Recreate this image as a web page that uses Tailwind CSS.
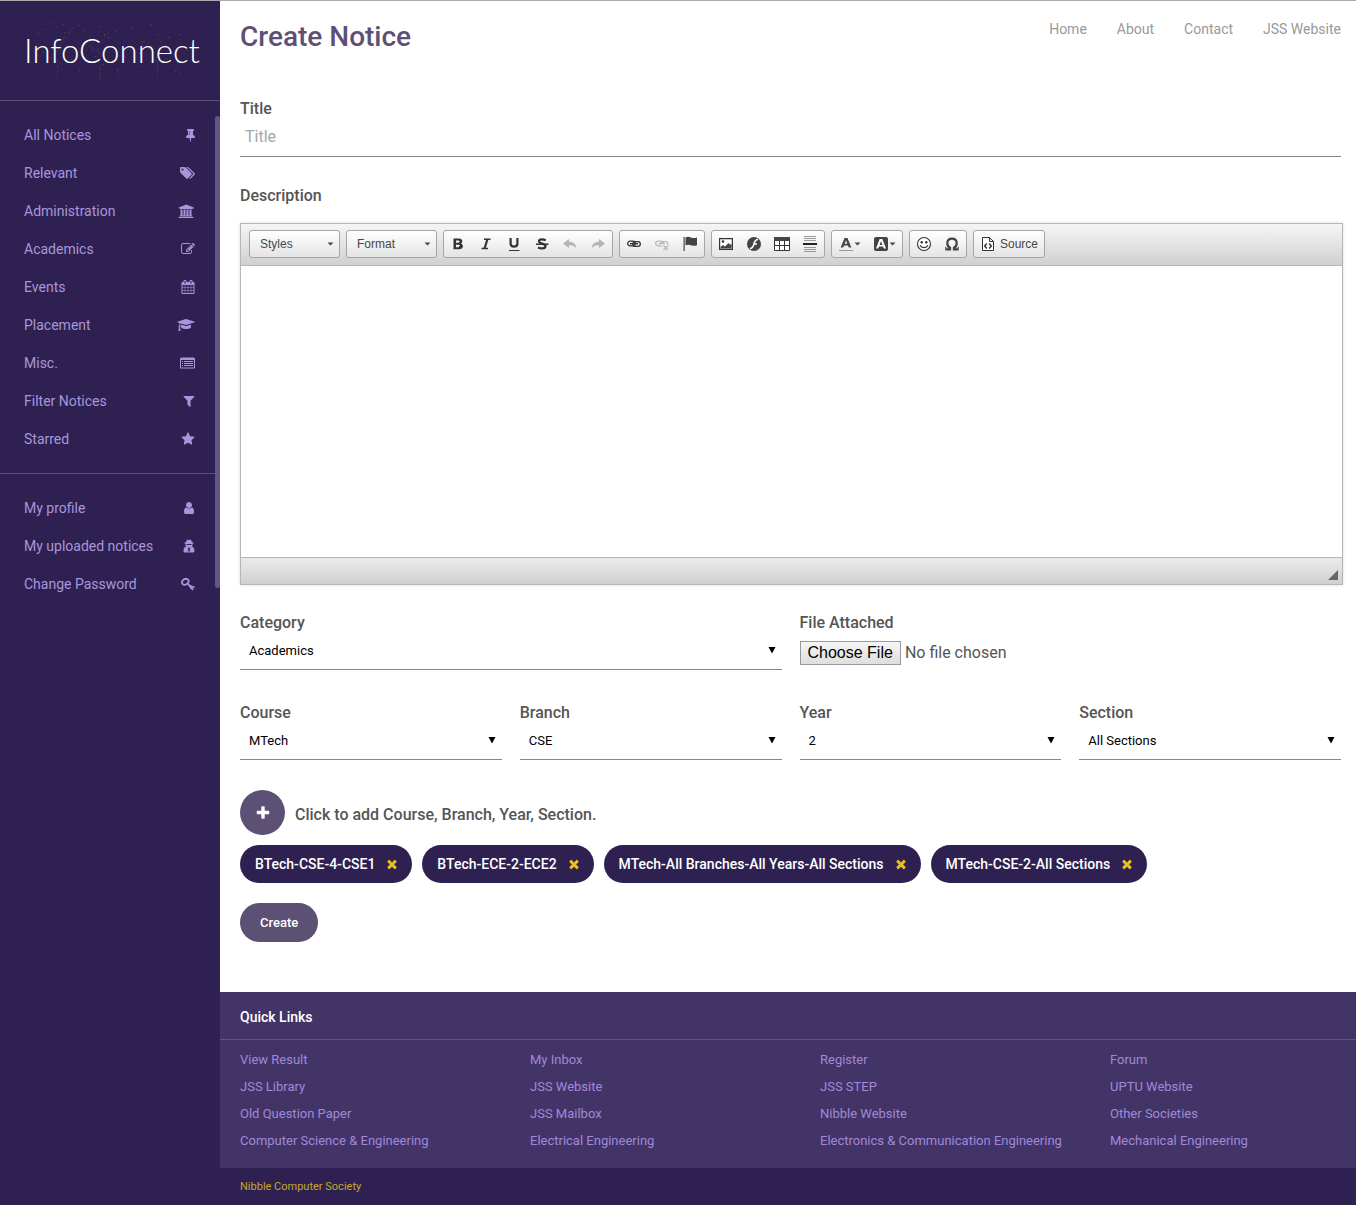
<!DOCTYPE html>
<html lang="en">
<head>
<meta charset="utf-8">
<title>InfoConnect - Create Notice</title>
<script src="https://cdn.jsdelivr.net/npm/@tailwindcss/browser@4"></script>
</head>
<body class="bg-white font-['Roboto',sans-serif] text-[#555]">
<svg class="hidden">
  <symbol id="caret" viewBox="0 0 8 8"><path d="M.5 1h7L4 7.500z"/></symbol>
  <symbol id="times" viewBox="0 0 1792 1792"><path d="M1490 1322q0 40-28 68l-136 136q-28 28-68 28t-68-28l-294-294-294 294q-28 28-68 28t-68-28l-136-136q-28-28-28-68t28-68l294-294-294-294q-28-28-28-68t28-68l136-136q28-28 68-28t68 28l294 294 294-294q28-28 68-28t68 28l136 136q28 28 28 68t-28 68l-294 294 294 294q28 28 28 68z"/></symbol>
</svg>
<div class="flex min-h-screen border-t border-[#aaa]">

  <!-- Sidebar -->
  <aside class="flex w-[220px] shrink-0 flex-col bg-[#2e2151]">
    <div class="relative flex h-[100px] items-center justify-center border-b border-[#5c4f78] pl-1">
      <svg class="absolute inset-0 h-full w-full" viewBox="0 0 220 100" fill="none" stroke="#a8764f" stroke-opacity=".55" aria-hidden="true">
        <path d="M37 33h1M44 29h1M52 23h1M55 27h1M62 24h1M64 32h1M68 33h1M78 25h1M83 30h1M99 26h1M104 34h1M108 37h1M116 31h1M131 28h1M142 41h1M151 24h1M158 34h1M161 41h1M169 37h1M180 34h1M36 47h1M42 52h1M50 57h1M71 59h1M80 52h1M92 49h1M95 56h1M103 64h1M112 60h1M124 57h1M139 53h1M149 48h1M156 60h1M166 58h1M178 62h1M187 50h1M47 66h1M61 69h1M79 70h1M117 69h1M141 66h1M176 71h1"/>
        <path stroke-opacity=".2" stroke-dasharray="2 1" d="M57 58v20M61 62l-3 6M100 60v20M97 47l8 14M89 44l10 9M108 31l-8 13M64 36l-9 18M73 26l-5 7M158 61v16M164 46l-8 12M178 66l4 12M118 68v8M146 38l-5 10"/>
      </svg>
      <a href="#" class="relative font-['Lato',sans-serif] text-[33px] leading-none font-light text-white">InfoConnect</a>
    </div>
    <div class="relative">
      <nav class="py-[15px]">
        <ul class="text-sm text-[#a995dc]">
          <li><a href="#" class="flex h-[38px] items-center justify-between pr-[25px] pl-6">All Notices<svg class="h-3.5 w-[9px] fill-current" viewBox="320 0 1152 1792"><path d="M800 864v-448q0-14-9-23t-23-9-23 9-9 23v448q0 14 9 23t23 9 23-9 9-23zm672 352q0 26-19 45t-45 19h-429l-51 483q-2 12-10.500 20.500t-20.500 8.500h-1q-27 0-32-27l-76-485h-404q-26 0-45-19t-19-45q0-123 78.500-221.500t177.500-98.500v-512q-52 0-90-38t-38-90 38-90 90-38h640q52 0 90 38t38 90-38 90-90 38v512q99 0 177.500 98.500t78.500 221.500z"/></svg></a></li>
          <li><a href="#" class="flex h-[38px] items-center justify-between pr-[25px] pl-6">Relevant<svg class="h-3.5 w-4 fill-current" viewBox="0 0 2048 1792"><path d="M576 448q0-53-37.500-90.500t-90.500-37.500-90.500 37.500-37.500 90.500 37.500 90.500 90.500 37.500 90.500-37.500 37.500-90.500zm1067 576q0 53-37 90l-491 492q-39 37-91 37-53 0-90-37l-715-716q-38-37-64.500-101t-26.500-117v-416q0-52 38-90t90-38h416q53 0 117 26.500t102 64.500l715 714q37 39 37 91zm384 0q0 53-37 90l-491 492q-39 37-91 37-36 0-59-14t-53-45l470-470q37-37 37-90 0-52-37-91l-715-714q-38-38-102-64.500t-117-26.500h224q53 0 117 26.500t102 64.500l715 714q37 39 37 91z"/></svg></a></li>
          <li><a href="#" class="flex h-[38px] items-center justify-between pr-[25px] pl-6">Administration<svg class="h-3.5 w-[17px] fill-current" viewBox="0 0 2048 1792"><path d="M992 64l960 384v128h-128q0 26-20.500 45t-48.500 19h-1526q-28 0-48.500-19t-20.500-45h-128v-128zm-736 640h256v768h128v-768h256v768h128v-768h256v768h128v-768h256v768h59q28 0 48.500 19t20.500 45v64h-1664v-64q0-26 20.500-45t48.500-19h59v-768zm1595 960q28 0 48.500 19t20.500 45v128h-1920v-128q0-26 20.500-45t48.500-19h1782z"/></svg></a></li>
          <li><a href="#" class="flex h-[38px] items-center justify-between pr-[25px] pl-6">Academics<svg class="h-3.5 w-3.5 fill-current" viewBox="0 0 1792 1792"><path d="M888 1184l116-116-152-152-116 116v56h96v96h56zm440-720q-16-16-33 1l-350 350q-17 17-1 33t33-1l350-350q17-17 1-33zm80 594v190q0 119-84.500 203.500t-203.500 84.500h-832q-119 0-203.500-84.500t-84.500-203.500v-832q0-119 84.500-203.500t203.500-84.500h832q63 0 117 25 15 7 18 23 3 17-9 29l-49 49q-14 14-32 8-23-6-45-6h-832q-66 0-113 47t-47 113v832q0 66 47 113t113 47h832q66 0 113-47t47-113v-126q0-13 9-22l64-64q15-15 35-7t20 29zm-96-738l288 288-672 672h-288v-288zm444 132l-92 92-288-288 92-92q28-28 68-28t68 28l152 152q28 28 28 68t-28 68z"/></svg></a></li>
          <li><a href="#" class="flex h-[38px] items-center justify-between pr-[25px] pl-6">Events<svg class="h-3.5 w-3.5 fill-current" viewBox="0 0 1792 1792"><path d="M192 1664h288v-288h-288v288zm352 0h320v-288h-320v288zm-352-352h288v-320h-288v320zm352 0h320v-320h-320v320zm-352-384h288v-288h-288v288zm736 736h320v-288h-320v288zm-384-736h320v-288h-320v288zm768 736h288v-288h-288v288zm-384-352h320v-320h-320v320zm-352-864v-288q0-13-9.500-22.500t-22.500-9.500h-64q-13 0-22.500 9.500t-9.500 22.500v288q0 13 9.500 22.500t22.500 9.500h64q13 0 22.500-9.500t9.500-22.500zm736 864h288v-320h-288v320zm-384-384h320v-288h-320v288zm384 0h288v-288h-288v288zm32-480v-288q0-13-9.500-22.500t-22.500-9.500h-64q-13 0-22.500 9.500t-9.500 22.500v288q0 13 9.500 22.500t22.500 9.500h64q13 0 22.500-9.500t9.500-22.500zm384-64v1280q0 52-38 90t-90 38h-1408q-52 0-90-38t-38-90v-1280q0-52 38-90t90-38h128v-96q0-66 47-113t113-47h64q66 0 113 47t47 113v96h384v-96q0-66 47-113t113-47h64q66 0 113 47t47 113v96h128q52 0 90 38t38 90z"/></svg></a></li>
          <li><a href="#" class="flex h-[38px] items-center justify-between pr-[25px] pl-6">Placement<svg class="h-3.5 w-[18px] fill-current" viewBox="0 0 2304 1792"><path d="M1774 836l18 316q4 69-82 128t-235 93.500-323 34.500-323-34.500-235-93.500-82-128l18-316 574 181q22 7 48 7t48-7zm530-324q0 23-22 31l-1120 352q-4 1-10 1t-10-1l-652-206q-43 34-71 111.500t-34 178.500q63 36 63 109 0 69-58 107l58 433q2 14-8 25-9 11-24 11h-192q-15 0-24-11-10-11-8-25l58-433q-58-38-58-107 0-73 65-111 11-207 98-330l-333-104q-22-8-22-31t22-31l1120-352q4-1 10-1t10 1l1120 352q22 8 22 31z"/></svg></a></li>
          <li><a href="#" class="flex h-[38px] items-center justify-between pr-[25px] pl-6">Misc.<svg class="h-3.5 w-[15px] fill-current" viewBox="0 0 15 14"><path fill-rule="evenodd" d="M1.500 1.500h12A1.500 1.500 0 0 1 15 3v8.500a1 1 0 0 1-1 1H1a1 1 0 0 1-1-1V3a1.500 1.500 0 0 1 1.500-1.500zM1 4v7.500h13V4zM2 5h1v1H2zM4 5h9v1H4zM2 7h1v1H2zM4 7h9v1H4zM2 9h1v1H2zM4 9h9v1H4z"/></svg></a></li>
          <li><a href="#" class="flex h-[38px] items-center justify-between pr-[25px] pl-6">Filter Notices<svg class="h-3.5 w-3 fill-current" viewBox="180 0 1432 1792"><path d="M1595 295q17 41-14 70l-493 493v742q0 42-39 59-13 5-25 5-27 0-45-19l-256-256q-19-19-19-45v-486l-493-493q-31-29-14-70 17-39 59-39h1280q42 0 59 39z"/></svg></a></li>
          <li><a href="#" class="flex h-[38px] items-center justify-between pr-[25px] pl-6">Starred<svg class="h-3.5 w-3.5 fill-current" viewBox="0 0 1792 1792"><path d="M1728 647q0 22-26 48l-363 354 86 500q1 7 1 20 0 21-10.500 35.500t-30.500 14.500q-19 0-40-12l-449-236-449 236q-22 12-40 12-21 0-31.500-14.500t-10.500-35.500q0-6 2-20l86-500-364-354q-25-27-25-48 0-37 56-46l502-73 225-455q19-41 49-41t49 41l225 455 502 73q56 9 56 46z"/></svg></a></li>
        </ul>
      </nav>
      <nav class="border-t border-[#5c4f78] py-[15px]">
        <ul class="text-sm text-[#a995dc]">
          <li><a href="#" class="flex h-[38px] items-center justify-between pr-[25px] pl-6">My profile<svg class="h-3.5 w-3 fill-current" viewBox="196 0 1400 1792"><path d="M1536 1399q0 109-62.500 187t-150.500 78h-854q-88 0-150.500-78t-62.500-187q0-85 8.500-160.500t31.500-152 58.500-131 94-89 134.500-34.500q131 128 313 128t313-128q76 0 134.500 34.500t94 89 58.500 131 31.500 152 8.500 160.500zm-256-887q0 159-112.500 271.500t-271.500 112.500-271.500-112.500-112.500-271.500 112.500-271.500 271.500-112.500 271.500 112.500 112.500 271.500z"/></svg></a></li>
          <li><a href="#" class="flex h-[38px] items-center justify-between pr-[25px] pl-6">My uploaded notices<svg class="h-3.5 w-3 fill-current" viewBox="0 0 12 14"><path fill-rule="evenodd" d="M4.300.5 6 1l1.700-.5L9 3l2 .9-1.500.9v1.600L9 7.500c1.800.8 2.500 2.300 2.500 4.200 0 1.100-.7 1.800-1.700 1.800H2.200c-1 0-1.700-.7-1.700-1.800 0-1.900.7-3.400 2.500-4.200l-.5-1.100V4.800L1 3.900 3 3zM3.500 5.100v.9h2l.5-.5.5.5h2v-.9zM4.200 8.800l1 .8-.5 2.900h.9L6 9.800l.4 2.700h.9l-.5-2.900 1-.8z"/></svg></a></li>
          <li><a href="#" class="flex h-[38px] items-center justify-between pr-[25px] pl-6">Change Password<svg class="h-3.5 w-3.5" viewBox="0 0 14 14" fill="none" stroke="currentColor" stroke-width="1.800"><ellipse cx="4.300" cy="4.800" rx="3.500" ry="2.700" transform="rotate(-35 4.300 4.800)"/><path d="M6.800 6.600 12 12.800M8.500 8.500 13.500 10.500M11 9.500l-1.700 2"/></svg></a></li>
        </ul>
      </nav>
      <div class="absolute top-[15px] right-0 bottom-[30px] w-[5px] rounded-full bg-[#655585]"></div>
    </div>
  </aside>

  <div class="flex min-w-0 flex-1 flex-col">
    <main class="flex-1 pr-[15px] pb-[50px] pl-5">
      <header class="flex h-[95px] items-start justify-between">
        <h1 class="pt-4 text-[28px] leading-10 font-medium text-[#5c5074]">Create Notice</h1>
        <nav class="flex gap-[30px] pt-[18px] text-sm text-[#999]">
          <a href="#">Home</a><a href="#">About</a><a href="#">Contact</a><a href="#">JSS Website</a>
        </nav>
      </header>

      <form>
        <label for="title" class="block pt-0.5 leading-[22px] font-medium">Title</label>
        <input id="title" type="text" placeholder="Title" class="block h-[37px] w-full border-b border-[#888] px-[5px] pb-1 text-base placeholder:text-[#a5a5a5] focus:outline-none">

        <label for="description" class="mt-[26px] mb-4 block pt-0.5 leading-[22px] font-medium">Description</label>
        <div class="box-content w-full border border-[#b6b6b6] shadow-[0_0_3px_rgba(0,0,0,0.15)]">
          <div class="flex h-[42px] items-center gap-1.5 border-b border-[#b6b6b6] bg-linear-to-b from-[#f5f5f5] to-[#cfd1cf] px-2 pb-px font-['Liberation_Sans',sans-serif] text-xs text-[#474747]">
            <div class="relative">
              <select aria-label="Styles" class="block h-7 w-[91px] appearance-none rounded-[3px] border border-[#a6a6a6] bg-linear-to-b from-white to-[#e4e4e4] pl-2.5"><option>Styles</option></select>
              <svg class="pointer-events-none absolute top-3 right-1.5 h-1 w-[7px] fill-[#474747]" viewBox="0 0 7 4"><path d="M.5.5h6l-3 3z"/></svg>
            </div>
            <div class="relative">
              <select aria-label="Format" class="block h-7 w-[91px] appearance-none rounded-[3px] border border-[#a6a6a6] bg-linear-to-b from-white to-[#e4e4e4] pl-2.5"><option>Format</option></select>
              <svg class="pointer-events-none absolute top-3 right-1.5 h-1 w-[7px] fill-[#474747]" viewBox="0 0 7 4"><path d="M.5.5h6l-3 3z"/></svg>
            </div>
            <div class="flex h-7 items-center rounded-[3px] border border-[#a6a6a6] bg-linear-to-b from-white to-[#e4e4e4]">
              <button type="button" aria-label="Bold" class="px-1.5"><svg class="size-4" viewBox="0 0 16 16"><path fill="#333" fill-rule="evenodd" d="M3.500 2.500h5.200c2.300 0 3.600 1 3.600 2.800 0 1.200-.6 2-1.600 2.300 1.400.3 2.200 1.200 2.200 2.600 0 2-1.400 3-3.700 3H3.500zM6 4.500v2.300h2c1 0 1.500-.4 1.500-1.200S9 4.500 8 4.500zm0 4.200v2.500h2.300c1.100 0 1.600-.4 1.600-1.200s-.5-1.300-1.600-1.300z"/></svg></button>
              <button type="button" aria-label="Italic" class="px-1.5"><svg class="size-4" viewBox="0 0 16 16" fill="none" stroke="#333"><path stroke-width="1.500" d="M6 3.200h6.500M3.500 12.500H10"/><path stroke-width="2.200" d="M9.500 3l-3 9.500"/></svg></button>
              <button type="button" aria-label="Underline" class="px-1.5"><svg class="size-4" viewBox="0 0 16 16" fill="none" stroke="#333"><path stroke-width="2.200" d="M4.600 2v5.500c0 2.200 1.100 3.200 3.400 3.200s3.400-1 3.400-3.200V2"/><path d="M3 14.500h10.500"/></svg></button>
              <button type="button" aria-label="Strikethrough" class="px-1.5"><svg class="size-4" viewBox="0 0 16 16" fill="none" stroke="#333"><path stroke-width="2.200" d="M11.800 4.200C10.500 3.700 9.500 3.400 8 3.400c-2 0-3 .6-3 1.800 0 3 6.500 1.800 6.500 4.800 0 1.700-1.300 2.400-3.300 2.400-1.500 0-3-.4-4.200-1"/><path stroke-width="1.500" d="M2 8.200h12.500"/></svg></button>
              <button type="button" aria-label="Undo" class="px-1.5"><svg class="size-4" viewBox="0 0 16 16"><path fill="#b4b4b4" d="M1 7.500 7 3v2.700c4 0 7 2 7.500 7-1.700-2.500-4-3.400-7.500-3.400V12z"/></svg></button>
              <button type="button" aria-label="Redo" class="px-1.5"><svg class="size-4" viewBox="0 0 16 16"><path fill="#b4b4b4" d="M15 7.500 9 3v2.700c-4 0-7 2-7.500 7 1.700-2.500 4-3.400 7.500-3.400V12z"/></svg></button>
            </div>
            <div class="flex h-7 items-center rounded-[3px] border border-[#a6a6a6] bg-linear-to-b from-white to-[#e4e4e4]">
              <button type="button" aria-label="Link" class="px-1.5"><svg class="size-4" viewBox="0 0 16 16" fill="none" stroke="#333" stroke-width="1.300"><rect x="1.700" y="5.200" width="7.600" height="4.600" rx="2.300"/><rect x="6.700" y="5.700" width="7.600" height="4.600" rx="2.300"/><path stroke-width="1.400" d="M4 7.700h8"/></svg></button>
              <button type="button" aria-label="Unlink" class="px-1.5"><svg class="size-4" viewBox="0 0 16 16" fill="none" stroke="#bbb" stroke-width="1.300"><path d="M8 9.800H4a2.300 2.300 0 0 1 0-4.600h3a2.300 2.300 0 0 1 2.200 1.800M7 8a2.200 2.200 0 0 1 2.200-2.300H12A2.200 2.200 0 0 1 13.500 9M4.500 7.700H11"/><path stroke-width="1.600" d="m9.500 9.500 4.500 4.500m0-4.500L9.500 14"/></svg></button>
              <button type="button" aria-label="Anchor" class="px-1.5"><svg class="size-4" viewBox="0 0 16 16" fill="#444"><path d="M1.500 1h1.200v14H1.500z"/><path d="M3.500 1.500c2-1 3.500-.8 5.500 0s3.500.7 6 0v7.700c-2.200.8-4 .7-6 0s-3.500-.8-5.500 0z"/></svg></button>
            </div>
            <div class="flex h-7 items-center rounded-[3px] border border-[#a6a6a6] bg-linear-to-b from-white to-[#e4e4e4]">
              <button type="button" aria-label="Image" class="px-1.5"><svg class="size-4" viewBox="0 0 16 16"><path fill="#fff" stroke="#333" stroke-width="1.200" d="M1.600 2.600h12.800v10.800H1.600z"/><circle cx="5" cy="5.500" r="1.300" fill="#333"/><path fill="#444" d="M2.500 12.500V11L5 9l2 1.500L10.500 7l1.500 1.700 1-1 .5.800v4z"/></svg></button>
              <button type="button" aria-label="Flash" class="px-1.5"><svg class="size-4" viewBox="0 0 16 16"><circle cx="8" cy="8" r="7" fill="#444"/><path fill="none" stroke="#fff" stroke-width="1.700" d="M12 3.500c-3 0-3.300 2-4 4.500s-1.500 4.500-4 4.500M7.500 8H11"/></svg></button>
              <button type="button" aria-label="Table" class="px-1.5"><svg class="size-4" viewBox="0 0 16 16"><path fill="#fff" stroke="#333" d="M.5 1.500h15v13H.5zM5.500 5v9.500M10.500 5v9.500M.5 9.500h15"/><path fill="#444" d="M0 1h16v4H0z"/></svg></button>
              <button type="button" aria-label="Horizontal line" class="px-1.5"><svg class="size-4" viewBox="0 0 16 16" fill="none"><path stroke="#999" d="M2 .5h12M2 2.500h12M2 4.500h12M2 11.500h12M2 13.500h12M2 15.500h12"/><path stroke="#222" stroke-width="2" d="M1 8h14"/></svg></button>
            </div>
            <div class="flex h-7 items-center rounded-[3px] border border-[#a6a6a6] bg-linear-to-b from-white to-[#e4e4e4]">
              <button type="button" aria-label="Text colour" class="flex w-[35px] items-center px-1.5"><svg class="size-4 shrink-0" viewBox="0 0 16 16"><path fill="#444" fill-rule="evenodd" d="M6.500 2h3l3.800 9.500h-2.500L10 9.400H6l-.8 2.100H2.700zM8 4.200 6.700 7.700h2.600z"/><path fill="#999" d="M1 14h14v1H1z"/></svg><svg class="h-1 w-[7px] shrink-0 fill-[#474747]" viewBox="0 0 7 4"><path d="M.5.5h6l-3 3z"/></svg></button>
              <button type="button" aria-label="Background colour" class="flex w-[35px] items-center px-1.5"><svg class="size-4 shrink-0" viewBox="0 0 16 16"><rect x="1" y="1" width="14" height="14" rx="2" fill="#444"/><path fill="#fff" fill-rule="evenodd" d="M6.700 3h2.600L13 12.500h-2.200l-.8-2H6l-.8 2H3zM8 5 6.600 8.900h2.800z"/></svg><svg class="h-1 w-[7px] shrink-0 fill-[#474747]" viewBox="0 0 7 4"><path d="M.5.5h6l-3 3z"/></svg></button>
            </div>
            <div class="flex h-7 items-center rounded-[3px] border border-[#a6a6a6] bg-linear-to-b from-white to-[#e4e4e4]">
              <button type="button" aria-label="Smiley" class="px-1.5"><svg class="size-4" viewBox="0 0 16 16"><circle cx="8" cy="8" r="6.500" fill="#fff" stroke="#333" stroke-width="1.100"/><circle cx="5.700" cy="6.200" r="1.200" fill="#333"/><circle cx="10.300" cy="6.200" r="1.200" fill="#333"/><path fill="none" stroke="#333" stroke-width="1.200" d="M4 9.300c1.500 3 6.500 3 8 0"/></svg></button>
              <button type="button" aria-label="Special character" class="px-1.5"><svg class="size-4" viewBox="0 0 16 16" fill="none" stroke="#444"><path stroke-width="2.200" d="M2 13.300h4v-1.500C4.300 11 3.300 9.300 3.300 7.200 3.300 4.400 5.200 2.600 8 2.600s4.700 1.800 4.700 4.600c0 2.100-1 3.800-2.700 4.600v1.500h4"/><path d="M1.800 14.300v-3.500M14.200 14.300v-3.500"/></svg></button>
            </div>
            <button type="button" class="flex h-7 items-center gap-1 rounded-[3px] border border-[#a6a6a6] bg-linear-to-b from-white to-[#e4e4e4] px-1.5"><svg class="size-4" viewBox="0 0 16 16" fill="none" stroke="#333"><path fill="#fff" d="M2.500 1.500h7l4 4v9h-11z"/><path d="M9.500 1.500v4h4"/><path stroke-width="1.500" d="M6.800 7.500 4.700 10l2.100 2.500M9.200 7.500l2.100 2.500-2.100 2.500"/></svg>Source</button>
          </div>
          <textarea id="description" class="block h-[291px] w-full resize-none p-5 focus:outline-none"></textarea>
          <div class="flex h-[27px] items-end justify-end border-t border-[#b6b6b6] bg-linear-to-b from-[#ebebeb] to-[#cfd1cf] p-1">
            <svg class="size-2.5 fill-[#666]" viewBox="0 0 10 10"><path d="M10 0v10H0z"/></svg>
          </div>
        </div>

        <div class="mt-[25px] grid grid-cols-4 gap-x-[18px] gap-y-[30px]">
          <div class="relative col-span-2">
            <label for="category" class="block pt-0.5 leading-[22px] font-medium">Category</label>
            <select id="category" class="block h-9 w-full appearance-none border-b border-[#888] bg-white pb-0.5 pl-[9px] text-[13px] text-black"><option>Academics</option></select>
            <svg class="pointer-events-none absolute right-1.5 bottom-4 size-2" aria-hidden="true"><use href="#caret"/></svg>
          </div>
          <div class="col-span-2">
            <label for="file" class="block pt-0.5 leading-[22px] font-medium">File Attached</label>
            <input id="file" type="file" class="mt-[7px] block h-6 w-full text-base leading-6 file:mr-1 file:h-6 file:border file:border-solid file:border-[#999] file:bg-linear-to-b file:from-[#f6f6f6] file:to-[#dedede] file:px-[7px] file:font-['Liberation_Sans',sans-serif] file:text-base file:leading-5 file:text-black">
          </div>
          <div class="relative">
            <label for="course" class="block pt-0.5 leading-[22px] font-medium">Course</label>
            <select id="course" class="block h-9 w-full appearance-none border-b border-[#888] bg-white pb-0.5 pl-[9px] text-[13px] text-black"><option>MTech</option></select>
            <svg class="pointer-events-none absolute right-1.5 bottom-4 size-2" aria-hidden="true"><use href="#caret"/></svg>
          </div>
          <div class="relative">
            <label for="branch" class="block pt-0.5 leading-[22px] font-medium">Branch</label>
            <select id="branch" class="block h-9 w-full appearance-none border-b border-[#888] bg-white pb-0.5 pl-[9px] text-[13px] text-black"><option>CSE</option></select>
            <svg class="pointer-events-none absolute right-1.5 bottom-4 size-2" aria-hidden="true"><use href="#caret"/></svg>
          </div>
          <div class="relative">
            <label for="year" class="block pt-0.5 leading-[22px] font-medium">Year</label>
            <select id="year" class="block h-9 w-full appearance-none border-b border-[#888] bg-white pb-0.5 pl-[9px] text-[13px] text-black"><option>2</option></select>
            <svg class="pointer-events-none absolute right-1.5 bottom-4 size-2" aria-hidden="true"><use href="#caret"/></svg>
          </div>
          <div class="relative">
            <label for="section" class="block pt-0.5 leading-[22px] font-medium">Section</label>
            <select id="section" class="block h-9 w-full appearance-none border-b border-[#888] bg-white pb-0.5 pl-[9px] text-[13px] text-black"><option>All Sections</option></select>
            <svg class="pointer-events-none absolute right-1.5 bottom-4 size-2" aria-hidden="true"><use href="#caret"/></svg>
          </div>
        </div>

        <div class="mt-[30px] flex items-center gap-2.5">
          <button type="button" id="add" aria-label="Add" class="flex size-[45px] items-center justify-center rounded-full bg-[#5c5074]"><svg class="size-4 fill-white" viewBox="0 0 1792 1792"><path d="M1600 736v192q0 40-28 68t-68 28h-416v416q0 40-28 68t-68 28h-192q-40 0-68-28t-28-68v-416h-416q-40 0-68-28t-28-68v-192q0-40 28-68t68-28h416v-416q0-40 28-68t68-28h192q40 0 68 28t28 68v416h416q40 0 68 28t28 68z"/></svg></button>
          <label for="add" class="pt-1 font-medium">Click to add Course, Branch, Year, Section.</label>
        </div>

        <div class="mt-2.5 flex flex-wrap gap-2.5 text-sm font-medium text-white">
          <span class="flex h-[38px] items-center gap-2.5 rounded-full bg-[#2e2151] pr-[13px] pl-[15px]">BTech-CSE-4-CSE1<button type="button" aria-label="Remove"><svg class="block size-3.5 fill-[#e6c01c]"><use href="#times"/></svg></button></span>
          <span class="flex h-[38px] items-center gap-2.5 rounded-full bg-[#2e2151] pr-[13px] pl-[15px]">BTech-ECE-2-ECE2<button type="button" aria-label="Remove"><svg class="block size-3.5 fill-[#e6c01c]"><use href="#times"/></svg></button></span>
          <span class="flex h-[38px] items-center gap-2.5 rounded-full bg-[#2e2151] pr-[13px] pl-[15px]">MTech-All Branches-All Years-All Sections<button type="button" aria-label="Remove"><svg class="block size-3.5 fill-[#e6c01c]"><use href="#times"/></svg></button></span>
          <span class="flex h-[38px] items-center gap-2.5 rounded-full bg-[#2e2151] pr-[13px] pl-[15px]">MTech-CSE-2-All Sections<button type="button" aria-label="Remove"><svg class="block size-3.5 fill-[#e6c01c]"><use href="#times"/></svg></button></span>
        </div>

        <button type="submit" class="mt-5 block h-[39px] rounded-full bg-[#5c5074] px-5 text-[13px] font-medium text-white">Create</button>
      </form>
    </main>

    <footer class="bg-[#433468] text-[13px]">
      <h2 class="border-b border-[#5f5278] pt-[15px] pb-3 pl-5 text-sm font-medium text-white">Quick Links</h2>
      <ul class="grid grid-cols-4 gap-x-11 pt-1.5 pb-3.5 pl-5 leading-[27px] whitespace-nowrap text-[#a088d8]">
        <li><a href="#">View Result</a></li><li><a href="#">My Inbox</a></li><li><a href="#">Register</a></li><li><a href="#">Forum</a></li>
        <li><a href="#">JSS Library</a></li><li><a href="#">JSS Website</a></li><li><a href="#">JSS STEP</a></li><li><a href="#">UPTU Website</a></li>
        <li><a href="#">Old Question Paper</a></li><li><a href="#">JSS Mailbox</a></li><li><a href="#">Nibble Website</a></li><li><a href="#">Other Societies</a></li>
        <li><a href="#">Computer Science &amp; Engineering</a></li><li><a href="#">Electrical Engineering</a></li><li><a href="#">Electronics &amp; Communication Engineering</a></li><li><a href="#">Mechanical Engineering</a></li>
      </ul>
      <p class="bg-[#2e2151] pt-px pl-5 text-[11px] leading-9 text-[#c5a82c]"><a href="#">Nibble Computer Society</a></p>
    </footer>
  </div>
</div>
</body>
</html>
